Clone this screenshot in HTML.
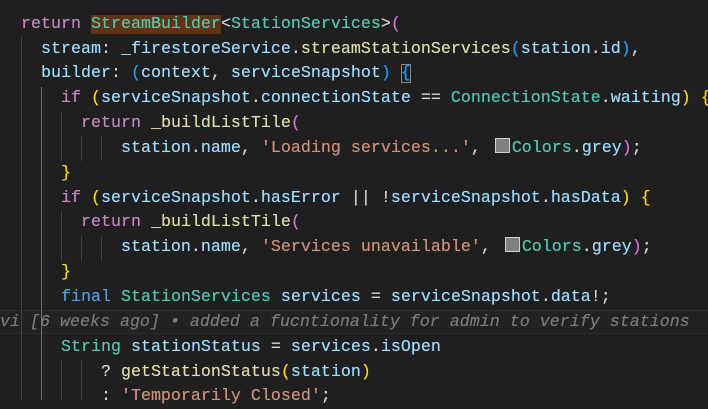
<!DOCTYPE html>
<html><head><meta charset="utf-8"><style>
html,body{margin:0;padding:0;background:#1f1f1f;width:708px;height:400px;overflow:hidden}
.c{position:absolute;left:0;top:0;width:708px;height:400px}
.l{position:absolute;left:1px;height:25px;line-height:25px;white-space:pre;font-family:"Liberation Mono",monospace;font-size:16.67px;color:#d4d4d4;text-shadow:0 0 0.4px currentColor}
.g{position:absolute;width:1px;background:#404040}
.k{color:#c586c0}.b{color:#569cd6}.t{color:#4ec9b0}.v{color:#9cdcfe}.f{color:#dcdcaa}.s{color:#ce9178}
.p1{color:#da70d6}.p2{color:#179fff}.p3{color:#ffd700}
.hl{background:#613214}
.sq{display:inline-block;width:13px;height:13px;border:1px solid #d0d0d0;background:#808080;margin:0 2px 0 4px;vertical-align:-1px}
.bm{outline:1px solid #888;outline-offset:-1px}
.cur{position:absolute;left:0;width:708px;top:310px;height:22px;border-top:1px solid #2c2c2c;border-bottom:1px solid #2c2c2c;background:#222}
.bl{color:#7a7a7a;font-style:italic}
</style></head><body><div class="c">
<div class="cur"></div>
<div class="g" style="left:21px;top:37px;height:363px"></div>
<div class="g" style="left:41px;top:87px;height:313px;background:#707070"></div>
<div class="g" style="left:61px;top:111px;height:50px"></div>
<div class="g" style="left:81px;top:136px;height:25px"></div>
<div class="g" style="left:101px;top:136px;height:25px"></div>
<div class="g" style="left:61px;top:211px;height:50px"></div>
<div class="g" style="left:81px;top:236px;height:25px"></div>
<div class="g" style="left:101px;top:236px;height:25px"></div>
<div class="g" style="left:61px;top:360px;height:40px"></div>
<div class="g" style="left:81px;top:360px;height:40px"></div>

<div class="l" style="top:11.6px">  <span class="k">return</span> <span class="t hl">StreamBuilder</span>&lt;<span class="t">StationServices</span>&gt;<span class="p1">(</span></div>
<div class="l" style="top:36.5px">    <span class="v">stream</span>: <span class="v">_firestoreService</span>.<span class="f">streamStationServices</span><span class="p2">(</span><span class="v">station</span>.<span class="v">id</span><span class="p2">)</span>,</div>
<div class="l" style="top:61.3px">    <span class="v">builder</span>: <span class="p2">(</span><span class="v">context</span>, <span class="v">serviceSnapshot</span><span class="p2">)</span> <span class="p2 bm">{</span></div>
<div class="l" style="top:86.2px">      <span class="k">if</span> <span class="p3">(</span><span class="v">serviceSnapshot</span>.<span class="v">connectionState</span> == <span class="t">ConnectionState</span>.<span class="v">waiting</span><span class="p3">)</span> <span class="p3">{</span></div>
<div class="l" style="top:111px">        <span class="k">return</span> <span class="f">_buildListTile</span><span class="p1">(</span></div>
<div class="l" style="top:135.9px">            <span class="v">station</span>.<span class="v">name</span>, <span class="s">'Loading services...'</span>, <span class="sq"></span><span class="t">Colors</span>.<span class="v">grey</span><span class="p1">)</span>;</div>
<div class="l" style="top:160.7px">      <span class="p3">}</span></div>
<div class="l" style="top:185.6px">      <span class="k">if</span> <span class="p3">(</span><span class="v">serviceSnapshot</span>.<span class="v">hasError</span> || !<span class="v">serviceSnapshot</span>.<span class="v">hasData</span><span class="p3">)</span> <span class="p3">{</span></div>
<div class="l" style="top:210.4px">        <span class="k">return</span> <span class="f">_buildListTile</span><span class="p1">(</span></div>
<div class="l" style="top:235.3px">            <span class="v">station</span>.<span class="v">name</span>, <span class="s">'Services unavailable'</span>, <span class="sq"></span><span class="t">Colors</span>.<span class="v">grey</span><span class="p1">)</span>;</div>
<div class="l" style="top:260.1px">      <span class="p3">}</span></div>
<div class="l" style="top:285px">      <span class="b">final</span> <span class="t">StationServices</span> <span class="v">services</span> = <span class="v">serviceSnapshot</span>.<span class="v">data</span>!;</div>
<div class="l bl" style="top:309.8px;left:0">vi [6 weeks ago] • added a fucntionality for admin to verify stations</div>
<div class="l" style="top:334.7px">      <span class="t">String</span> <span class="v">stationStatus</span> = <span class="v">services</span>.<span class="v">isOpen</span></div>
<div class="l" style="top:359.5px">          ? <span class="f">getStationStatus</span><span class="p3">(</span><span class="v">station</span><span class="p3">)</span></div>
<div class="l" style="top:384.4px">          : <span class="s">'Temporarily Closed'</span>;</div>
</div></body></html>
